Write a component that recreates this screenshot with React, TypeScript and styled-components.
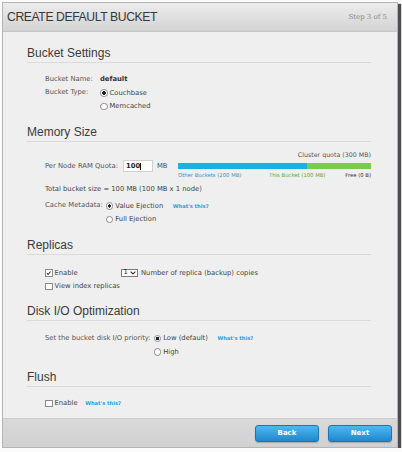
import styled, { createGlobalStyle } from 'styled-components'

const GlobalStyle = createGlobalStyle`
	html, body {
		margin: 0;
		padding: 0;
		background: #fbfbfb;
	}
	body {
		font-family: 'DejaVu Sans', Verdana, sans-serif;
	}
`

const SMALL = `'DejaVu Sans', Verdana, sans-serif`

const Panel = styled.div`
	box-sizing: border-box;
	margin: 2px 0 0 2px;
	width: 396px;
	height: 446px;
	border: 1px solid #b4b4b4;
	background: #efefef;
	display: flex;
	flex-direction: column;
	box-shadow: 3px 2px 1px rgba(45, 45, 50, 0.85);
`

const Header = styled.div`
	height: 28px;
	display: flex;
	align-items: center;
	justify-content: space-between;
	padding: 0 10px 0 4px;
	background: linear-gradient(#ececec, #d3d3d3);
	border-bottom: 1px solid #c4c4c4;
`

const Title = styled.h1`
	margin: 0;
	font-family: 'Liberation Sans', Arial, sans-serif;
	font-weight: normal;
	font-size: 12.2px;
	letter-spacing: -0.4px;
	color: #383838;
`

const Step = styled.span`
	font-family: 'DejaVu Serif', Georgia, serif;
	font-size: 7px;
	color: #8c8c8c;
`

const Body = styled.div`
	flex: 1;
	padding: 13.5px 26px 0 24px;
`

const Section = styled.section<{ $gap?: number }>`
	margin-top: ${(p) => p.$gap ?? 0}px;
`

const Heading = styled.h2`
	margin: 0;
	font-family: 'Liberation Sans', Arial, sans-serif;
	font-weight: normal;
	font-size: 12px;
	line-height: 14px;
	color: #3a3a3a;
	padding-bottom: 2px;
	border-bottom: 1px solid #dadada;
`

const Content = styled.div<{ $top?: number }>`
	padding: ${(p) => p.$top ?? 10}px 0 0 18px;
	font-family: ${SMALL};
	font-size: 6.8px;
	color: #555;
`

const Field = styled.div<{ $top?: number }>`
	display: flex;
	align-items: flex-start;
	margin-top: ${(p) => p.$top ?? 0}px;
`

const Label = styled.span<{ $w?: number }>`
	line-height: 13.5px;
	white-space: nowrap;
	${(p) => (p.$w ? `width: ${p.$w}px;` : 'margin-right: 3px;')}
`

const Value = styled.span`
	line-height: 13.5px;
	font-weight: bold;
	color: #333;
`

const Options = styled.div`
	display: flex;
	flex-direction: column;
`

const Option = styled.label`
	display: flex;
	align-items: center;
	height: 13.5px;
	gap: 2px;
	color: #444;
	white-space: nowrap;
`

const Radio = styled.span<{ $on?: boolean }>`
	box-sizing: border-box;
	width: 7.5px;
	height: 7.5px;
	border-radius: 50%;
	border: 1px solid #8a8a8a;
	background: radial-gradient(circle, ${(p) => (p.$on ? '#222 0 1.6px' : '#fff 0 1.6px')}, #fff 1.8px);
	flex: none;
`

const Box = styled.span`
	box-sizing: border-box;
	width: 7.5px;
	height: 7.5px;
	border: 1px solid #8a8a8a;
	background: #fff;
	flex: none;
	display: flex;
	align-items: center;
	justify-content: center;
`

const Help = styled.a`
	margin-left: 7.5px;
	font-size: 5.2px;
	font-weight: bold;
	color: #2b9ed6;
	text-decoration: none;
`

const Check = ({ on }: { on?: boolean }) => (
	<Box>
		{on && (
			<svg width='6' height='6' viewBox='0 0 6 6'>
				<path d='M1 3.2 L2.4 4.6 L5 1.3' fill='none' stroke='#333' strokeWidth='1.1' />
			</svg>
		)}
	</Box>
)

const QuotaGrid = styled.div`
	display: grid;
	grid-template-columns: 133px 1fr;
	grid-template-rows: 10px 13px 6px;
`

const ClusterQuota = styled.div`
	grid-column: 2;
	grid-row: 1;
	text-align: right;
	font-size: 6.3px;
	line-height: 10px;
	color: #555;
`

const QuotaInputs = styled.div`
	grid-column: 1;
	grid-row: 2;
	display: flex;
	align-items: center;
	line-height: 13px;
	white-space: nowrap;
`

const QuotaInput = styled.div`
	box-sizing: border-box;
	width: 30px;
	height: 11.5px;
	margin: 0 4px 0 5px;
	background: #fff;
	border: 1px solid #d0d0d0;
	padding-left: 2px;
	display: flex;
	align-items: center;
	font-weight: bold;
	color: #222;
	&::after {
		content: '';
		width: 0.8px;
		height: 7px;
		background: #111;
	}
`

const Bar = styled.div`
	grid-column: 2;
	grid-row: 2;
	align-self: center;
	height: 6.7px;
	display: flex;
`

const Segment = styled.div<{ $color: string; $grow: number }>`
	flex: ${(p) => p.$grow};
	background: ${(p) => p.$color};
`

const Legend = styled.div`
	grid-column: 2;
	grid-row: 3;
	display: flex;
	margin-top: -1px;
	font-size: 5.3px;
	line-height: 6px;
	white-space: nowrap;
`

const LegendItem = styled.span<{ $color: string; $w?: number }>`
	color: ${(p) => p.$color};
	${(p) => (p.$w ? `width: ${p.$w}px;` : '')}
	&:last-child {
		margin-left: auto;
	}
`

const Line = styled.div<{ $top?: number }>`
	display: flex;
	align-items: center;
	height: 13.5px;
	margin-top: ${(p) => p.$top ?? 0}px;
	white-space: nowrap;
	color: #444;
`

const CheckOption = styled.label<{ $w?: number }>`
	display: flex;
	align-items: center;
	gap: 2px;
	${(p) => (p.$w ? `width: ${p.$w}px;` : '')}
`

const Select = styled.div`
	box-sizing: border-box;
	width: 17px;
	height: 8.5px;
	border: 1px solid #7c7c7c;
	background: #fff;
	display: flex;
	align-items: center;
	justify-content: space-between;
	padding: 0 1.5px 0 1.5px;
	margin-right: 3px;
	color: #222;
	line-height: 7px;
`

const Footer = styled.div`
	height: 28px;
	display: flex;
	align-items: center;
	justify-content: flex-end;
	gap: 9px;
	padding-right: 5px;
	background: linear-gradient(#d9d9d9, #d1d1d1);
	border-top: 1px solid #cdcdcd;
`

const Button = styled.button`
	box-sizing: border-box;
	width: 64px;
	height: 17px;
	border: 1px solid #2073b3;
	border-radius: 3px;
	background: linear-gradient(#4db8ef, #1f88cf);
	color: #fff;
	font-family: ${SMALL};
	font-size: 7px;
	font-weight: bold;
	box-shadow: 0 1px 1px rgba(0, 0, 0, 0.2);
	padding: 0;
`

const quota = { other: 200, mine: 100, free: 0 }

export default function App() {
	return (
		<>
			<GlobalStyle />
			<Panel>
				<Header>
					<Title>CREATE DEFAULT BUCKET</Title>
					<Step>Step 3 of 5</Step>
				</Header>
				<Body>
					<Section>
						<Heading>Bucket Settings</Heading>
						<Content>
							<Field>
								<Label $w={55}>Bucket Name:</Label>
								<Value>default</Value>
							</Field>
							<Field>
								<Label $w={55}>Bucket Type:</Label>
								<Options>
									<Option>
										<Radio $on />
										Couchbase
									</Option>
									<Option>
										<Radio />
										Memcached
									</Option>
								</Options>
							</Field>
						</Content>
					</Section>

					<Section $gap={11.5}>
						<Heading>Memory Size</Heading>
						<Content $top={8}>
							<QuotaGrid>
								<ClusterQuota>Cluster quota (300 MB)</ClusterQuota>
								<QuotaInputs>
									Per Node RAM Quota:
									<QuotaInput>100</QuotaInput>
									MB
								</QuotaInputs>
								<Bar>
									<Segment $color='#1bb0e2' $grow={quota.other} />
									<Segment $color='#78cd4a' $grow={quota.mine} />
								</Bar>
								<Legend>
									<LegendItem $color='#3a8fc2' $w={91}>
										Other Buckets (200 MB)
									</LegendItem>
									<LegendItem $color='#5aa834'>This Bucket (100 MB)</LegendItem>
									<LegendItem $color='#333'>Free (0 B)</LegendItem>
								</Legend>
							</QuotaGrid>
							<Line $top={4}>Total bucket size = 100 MB (100 MB x 1 node)</Line>
							<Field $top={3}>
								<Label>Cache Metadata:</Label>
								<Options>
									<Option>
										<Radio $on />
										Value Ejection
										<Help href='#'>What's this?</Help>
									</Option>
									<Option>
										<Radio />
										Full Ejection
									</Option>
								</Options>
							</Field>
						</Content>
					</Section>

					<Section $gap={12}>
						<Heading>Replicas</Heading>
						<Content $top={11}>
							<Line>
								<CheckOption $w={76}>
									<Check on />
									Enable
								</CheckOption>
								<Select>
									1
									<svg width='6' height='4' viewBox='0 0 6 4'>
										<path d='M0.6 0.6 L3 3 L5.4 0.6' fill='none' stroke='#333' strokeWidth='1.1' />
									</svg>
								</Select>
								Number of replica (backup) copies
							</Line>
							<Line>
								<CheckOption>
									<Check />
									View index replicas
								</CheckOption>
							</Line>
						</Content>
					</Section>

					<Section $gap={11}>
						<Heading>Disk I/O Optimization</Heading>
						<Content $top={10.5}>
							<Field>
								<Label>Set the bucket disk I/O priority:</Label>
								<Options>
									<Option>
										<Radio $on />
										Low (default)
										<Help href='#'>What's this?</Help>
									</Option>
									<Option>
										<Radio />
										High
									</Option>
								</Options>
							</Field>
						</Content>
					</Section>

					<Section $gap={11}>
						<Heading>Flush</Heading>
						<Content $top={10}>
							<Line>
								<CheckOption>
									<Check />
									Enable
								</CheckOption>
								<Help href='#'>What's this?</Help>
							</Line>
						</Content>
					</Section>
				</Body>
				<Footer>
					<Button>Back</Button>
					<Button>Next</Button>
				</Footer>
			</Panel>
		</>
	)
}
